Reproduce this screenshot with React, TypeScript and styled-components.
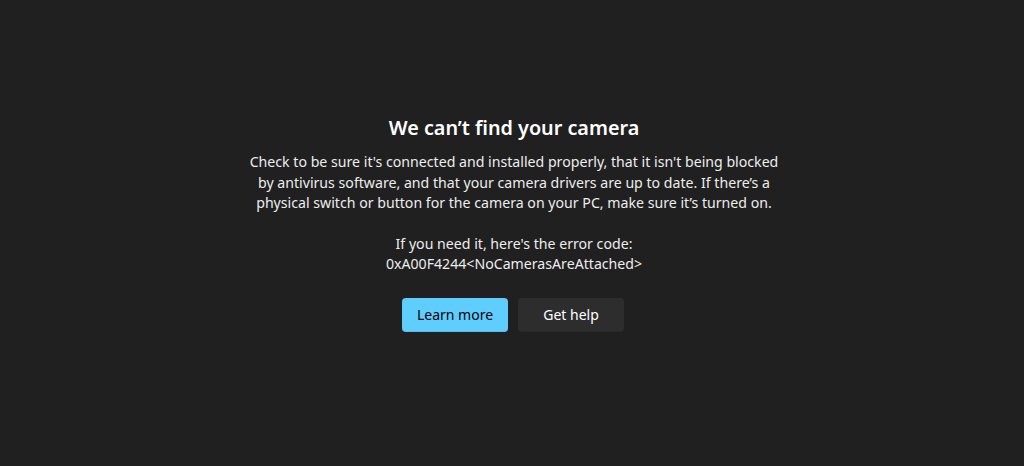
import React from "react";
import styled, { createGlobalStyle } from "styled-components";

const GlobalStyle = createGlobalStyle`
  html, body {
    margin: 0;
    padding: 0;
    background: #202020;
  }
  body {
    font-family: "Segoe UI", "Noto Sans", "Open Sans", sans-serif;
  }
`;

const Page = styled.main`
  width: 100%;
  height: 466px;
  box-sizing: border-box;
  padding: 114px 0 0 4px;
  display: flex;
  flex-direction: column;
  align-items: center;
  background: #202020;
  color: #fff;
  text-align: center;
`;

const Title = styled.h1`
  margin: 0;
  font-size: 19.8px;
  line-height: 28px;
  font-weight: 600;
  color: #fff;
`;

const Text = styled.p<{ $gap: number }>`
  margin: ${(p) => p.$gap}px 0 0;
  font-size: 14.15px;
  line-height: 20.5px;
  color: #ededed;
  white-space: nowrap;
`;

const Actions = styled.div`
  display: flex;
  gap: 10px;
  margin: 23px 2px 0 0;
`;

const Button = styled.button<{ $primary?: boolean }>`
  width: 106px;
  height: 34px;
  border: none;
  border-radius: 4px;
  font-family: inherit;
  font-size: 14px;
  cursor: pointer;
  background: ${(p) => (p.$primary ? "#60cdff" : "#2d2d2d")};
  color: ${(p) => (p.$primary ? "#000" : "#fff")};
  border-bottom: 1px solid ${(p) => (p.$primary ? "#5bbce8" : "#2a2a2a")};
`;

export default function App() {
  return (
    <>
      <GlobalStyle />
      <Page>
        <Title>We can’t find your camera</Title>
        <Text $gap={10}>
          Check to be sure it's connected and installed properly, that it isn't being blocked
          <br />
          by antivirus software, and that your camera drivers are up to date. If there’s a
          <br />
          physical switch or button for the camera on your PC, make sure it’s turned on.
        </Text>
        <Text $gap={20}>
          If you need it, here's the error code:
          <br />
          0xA00F4244&lt;NoCamerasAreAttached&gt;
        </Text>
        <Actions>
          <Button $primary>Learn more</Button>
          <Button>Get help</Button>
        </Actions>
      </Page>
    </>
  );
}
